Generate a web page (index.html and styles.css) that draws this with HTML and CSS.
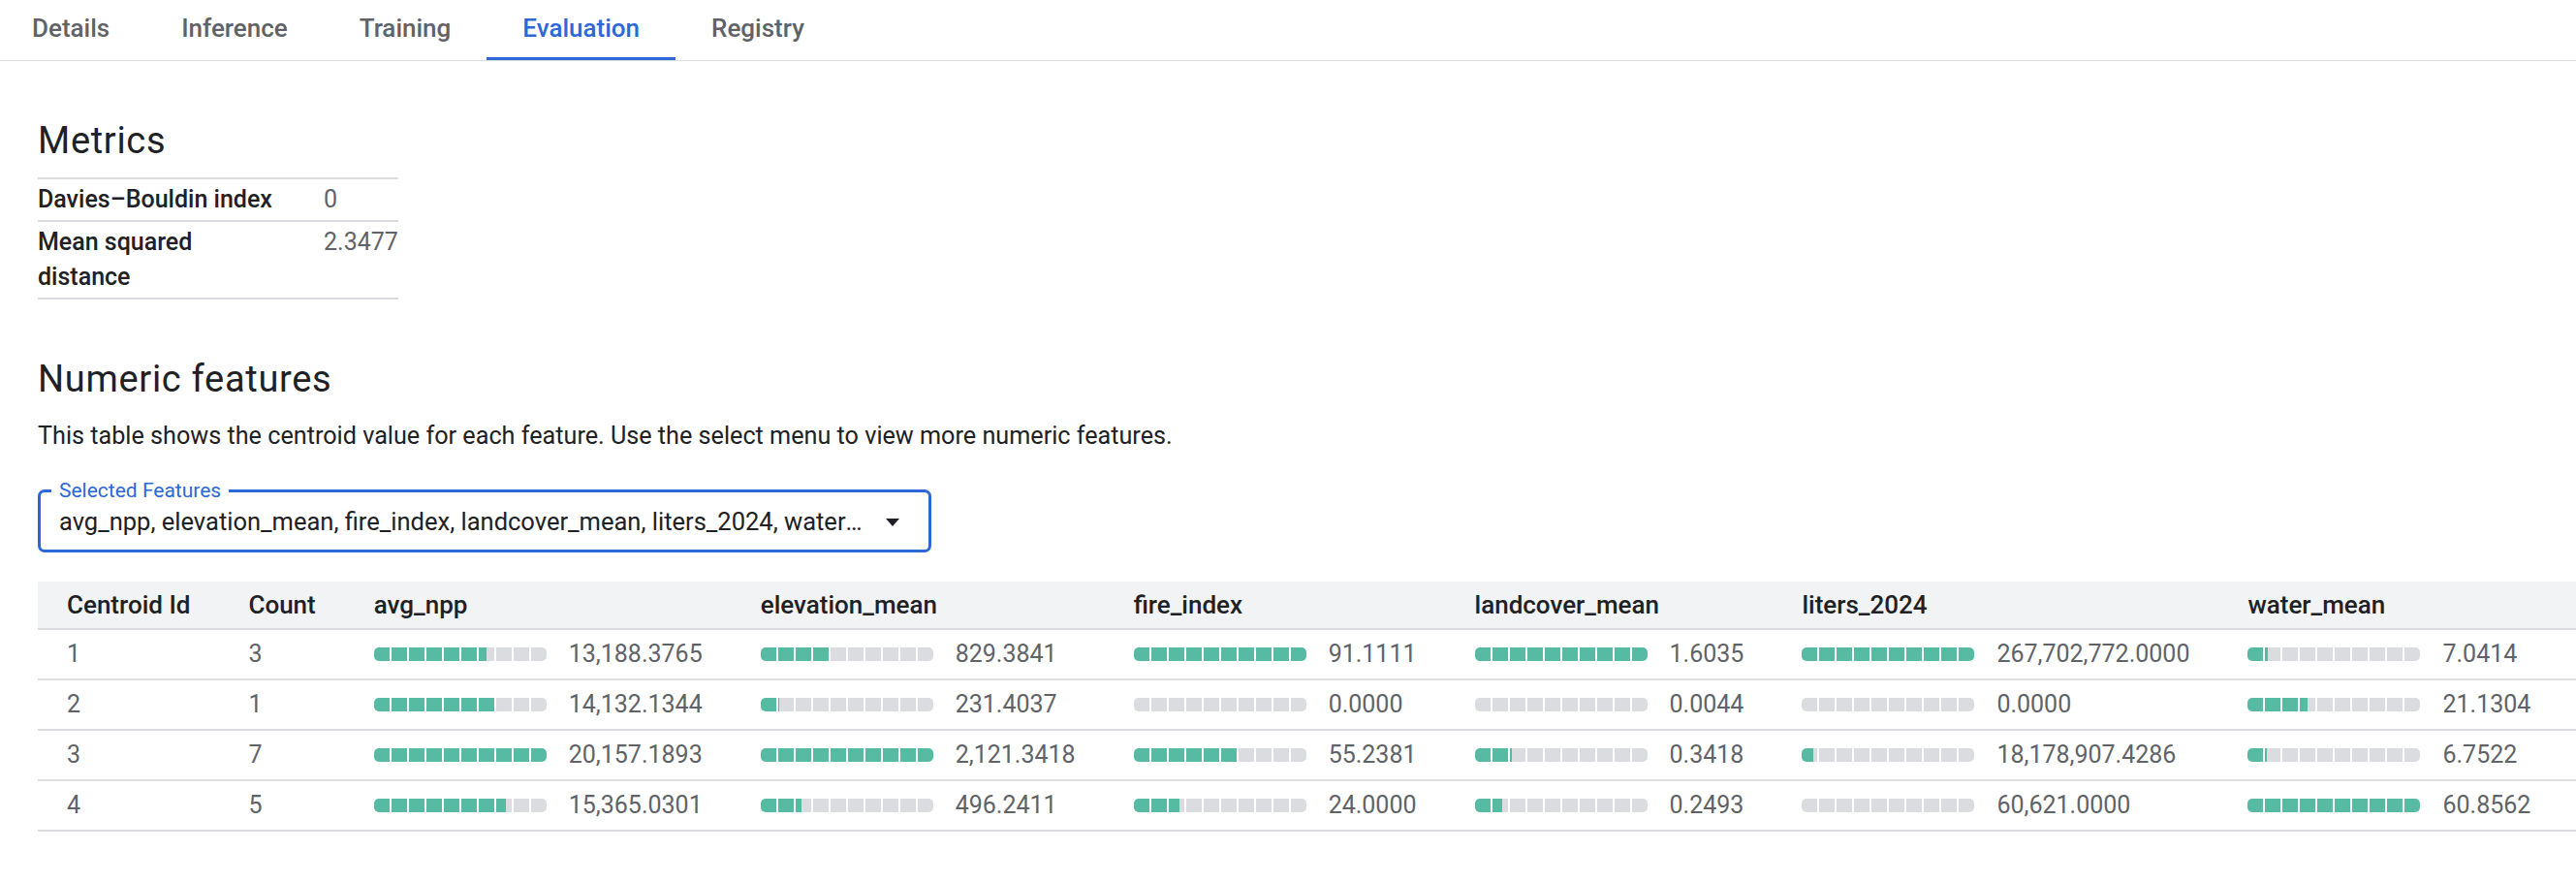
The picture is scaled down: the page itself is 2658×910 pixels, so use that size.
FILE: index.html
```html
<!DOCTYPE html>
<html lang="en">
<head>
<meta charset="utf-8">
<title>Evaluation</title>
<link rel="stylesheet" href="styles.css">
</head>
<body>
<nav class="tabs">
  <div class="tab">Details</div>
  <div class="tab">Inference</div>
  <div class="tab">Training</div>
  <div class="tab active">Evaluation</div>
  <div class="tab">Registry</div>
</nav>
<main class="content">
  <h2 class="heading heading-first">Metrics</h2>
  <table class="metrics">
    <tr>
      <td class="m-label">Davies–Bouldin index</td>
      <td class="m-value">0</td>
    </tr>
    <tr>
      <td class="m-label">Mean squared distance</td>
      <td class="m-value">2.3477</td>
    </tr>
  </table>

  <h2 class="heading heading-second">Numeric features</h2>
  <p class="desc">This table shows the centroid value for each feature. Use the select menu to view more numeric features.</p>

  <fieldset class="select">
    <legend class="select-label">Selected Features</legend>
    <div class="select-row">
      <div class="select-value">avg_npp, elevation_mean, fire_index, landcover_mean, liters_2024, water_mean</div>
      <span class="select-arrow"></span>
    </div>
  </fieldset>

  <div class="table-wrap">
    <table class="features">
      <thead>
        <tr>
          <th>Centroid Id</th>
          <th>Count</th>
          <th>avg_npp</th>
          <th>elevation_mean</th>
          <th>fire_index</th>
          <th>landcover_mean</th>
          <th>liters_2024</th>
          <th>water_mean</th>
          <th class="filler"></th>
        </tr>
      </thead>
      <tbody>
        <tr>
          <td>1</td>
          <td>3</td>
          <td><div class="cell"><span class="bar" style="--p:65.43%"></span><span>13,188.3765</span></div></td>
          <td><div class="cell"><span class="bar" style="--p:39.10%"></span><span>829.3841</span></div></td>
          <td><div class="cell"><span class="bar" style="--p:100%"></span><span>91.1111</span></div></td>
          <td><div class="cell"><span class="bar" style="--p:100%"></span><span>1.6035</span></div></td>
          <td><div class="cell"><span class="bar" style="--p:100%"></span><span>267,702,772.0000</span></div></td>
          <td><div class="cell"><span class="bar" style="--p:11.57%"></span><span>7.0414</span></div></td>
          <td class="filler"></td>
        </tr>
        <tr>
          <td>2</td>
          <td>1</td>
          <td><div class="cell"><span class="bar" style="--p:70.11%"></span><span>14,132.1344</span></div></td>
          <td><div class="cell"><span class="bar" style="--p:10.91%"></span><span>231.4037</span></div></td>
          <td><div class="cell"><span class="bar" style="--p:0%"></span><span>0.0000</span></div></td>
          <td><div class="cell"><span class="bar" style="--p:0.27%"></span><span>0.0044</span></div></td>
          <td><div class="cell"><span class="bar" style="--p:0%"></span><span>0.0000</span></div></td>
          <td><div class="cell"><span class="bar" style="--p:34.72%"></span><span>21.1304</span></div></td>
          <td class="filler"></td>
        </tr>
        <tr>
          <td>3</td>
          <td>7</td>
          <td><div class="cell"><span class="bar" style="--p:100%"></span><span>20,157.1893</span></div></td>
          <td><div class="cell"><span class="bar" style="--p:100%"></span><span>2,121.3418</span></div></td>
          <td><div class="cell"><span class="bar" style="--p:60.63%"></span><span>55.2381</span></div></td>
          <td><div class="cell"><span class="bar" style="--p:21.32%"></span><span>0.3418</span></div></td>
          <td><div class="cell"><span class="bar" style="--p:6.79%"></span><span>18,178,907.4286</span></div></td>
          <td><div class="cell"><span class="bar" style="--p:11.10%"></span><span>6.7522</span></div></td>
          <td class="filler"></td>
        </tr>
        <tr>
          <td>4</td>
          <td>5</td>
          <td><div class="cell"><span class="bar" style="--p:76.23%"></span><span>15,365.0301</span></div></td>
          <td><div class="cell"><span class="bar" style="--p:23.39%"></span><span>496.2411</span></div></td>
          <td><div class="cell"><span class="bar" style="--p:26.34%"></span><span>24.0000</span></div></td>
          <td><div class="cell"><span class="bar" style="--p:15.55%"></span><span>0.2493</span></div></td>
          <td><div class="cell"><span class="bar" style="--p:0.02%"></span><span>60,621.0000</span></div></td>
          <td><div class="cell"><span class="bar" style="--p:100%"></span><span>60.8562</span></div></td>
          <td class="filler"></td>
        </tr>
      </tbody>
    </table>
  </div>
</main>
</body>
</html>
```

FILE: styles.css
```css
:root {
  --blue: #2d68d8;
  --text: #202124;
  --muted: #5f6368;
  --line: #dadce0;
  --fill: #57bba3;
  --track: #dadce0;
}

html, body {
  margin: 0;
  padding: 0;
  background: #ffffff;
}

body {
  font-family: Roboto, "Liberation Sans", Arial, sans-serif;
  color: var(--text);
}

/* Tabs */
.tabs {
  display: flex;
  border-bottom: 1px solid var(--line);
}

.tab {
  height: 62px;
  box-sizing: border-box;
  padding: 0 37px 4px;
  display: flex;
  align-items: center;
  font-size: 26px;
  font-weight: 500;
  color: var(--muted);
  white-space: nowrap;
}

.tab:first-child {
  padding-left: 33px;
}

.tab.active {
  color: var(--blue);
  box-shadow: inset 0 -3px 0 var(--blue);
}

/* Content */
.content {
  padding: 0 0 0 39px;
}

.heading {
  font-size: 38px;
  font-weight: 400;
  letter-spacing: 0.7px;
  line-height: 48px;
  margin: 0;
  color: var(--text);
}

.heading-first {
  margin: 58px 0 14px;
}

.heading-second {
  margin: 58px 0 17px;
}

/* Metrics table */
.metrics {
  border-collapse: collapse;
  border-top: 2px solid var(--line);
  font-size: 25px;
  line-height: 36px;
}

.metrics td {
  padding: 3px 0;
  border-bottom: 2px solid var(--line);
  vertical-align: top;
}

.m-label {
  width: 250px;
  padding-right: 45px !important;
  font-weight: 500;
  color: var(--text);
}

.m-value {
  color: var(--muted);
  white-space: nowrap;
}

/* Description */
.desc {
  font-size: 25.2px;
  line-height: 36px;
  margin: 0 0 26px;
  color: var(--text);
}

/* Select */
.select {
  margin: 0;
  width: 922px;
  min-width: 0;
  box-sizing: border-box;
  border: 3px solid var(--blue);
  border-radius: 7px;
  padding: 2px 11px 11px;
}

.select-label {
  padding: 0 8px;
  font-size: 21px;
  line-height: 24px;
  color: var(--blue);
}

.select-row {
  display: flex;
  align-items: center;
  padding-left: 8px;
}

.select-value {
  flex: 1;
  min-width: 0;
  overflow: hidden;
  white-space: nowrap;
  text-overflow: ellipsis;
  font-size: 25.5px;
  line-height: 36px;
  color: var(--text);
}

.select-arrow {
  flex: none;
  width: 0;
  height: 0;
  border-left: 7.5px solid transparent;
  border-right: 7.5px solid transparent;
  border-top: 8px solid var(--text);
  margin: 2px 19px 0 21px;
}

/* Features table */
.table-wrap {
  margin-top: 30px;
  overflow: hidden;
}

.features {
  width: 100%;
  border-collapse: collapse;
  font-size: 25px;
  line-height: 36px;
  white-space: nowrap;
}

.features th {
  background: #f1f3f4;
  text-align: left;
  font-size: 26px;
  font-weight: 500;
  color: var(--text);
  padding: 6px 30px;
  border-bottom: 2px solid var(--line);
}

.features td {
  padding: 7px 30px;
  color: var(--muted);
  border-bottom: 2px solid var(--line);
}

.features .filler {
  width: 100%;
  padding: 0;
}

.cell {
  display: flex;
  align-items: center;
  gap: 23px;
}

.bar {
  flex: none;
  width: 178px;
  height: 14px;
  border-radius: 5px;
  background:
    repeating-linear-gradient(90deg, transparent 0 16px, #ffffff 16px 18px),
    linear-gradient(90deg, var(--fill) var(--p), var(--track) var(--p));
}
```
